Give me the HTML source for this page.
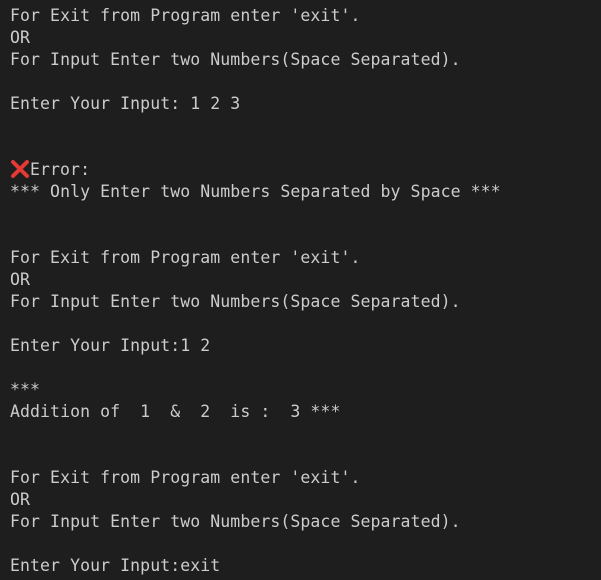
<!DOCTYPE html>
<html><head><meta charset="utf-8"><style>
html,body{margin:0;padding:0;background:#1e1e1e;width:601px;height:580px;overflow:hidden}
pre{margin:0;padding:5px 0 0 10px;font-family:"DejaVu Sans Mono","Liberation Mono",monospace;font-size:16.5px;letter-spacing:0.08px;line-height:22px;color:#cccccc;white-space:pre}
.x{display:inline-block;width:20px;height:18px;vertical-align:-3px;margin-right:0}
</style></head><body><pre>For Exit from Program enter 'exit'.
OR
For Input Enter two Numbers(Space Separated).

Enter Your Input: 1 2 3


<svg class="x" viewBox="0 0 20 18"><path d="M3 2 L17 16 M17 2 L3 16" stroke="#e53935" stroke-width="4" stroke-linecap="round"/></svg>Error:
*** Only Enter two Numbers Separated by Space ***


For Exit from Program enter 'exit'.
OR
For Input Enter two Numbers(Space Separated).

Enter Your Input:1 2

***
Addition of  1  &amp;  2  is :  3 ***


For Exit from Program enter 'exit'.
OR
For Input Enter two Numbers(Space Separated).

Enter Your Input:exit
</pre></body></html>
